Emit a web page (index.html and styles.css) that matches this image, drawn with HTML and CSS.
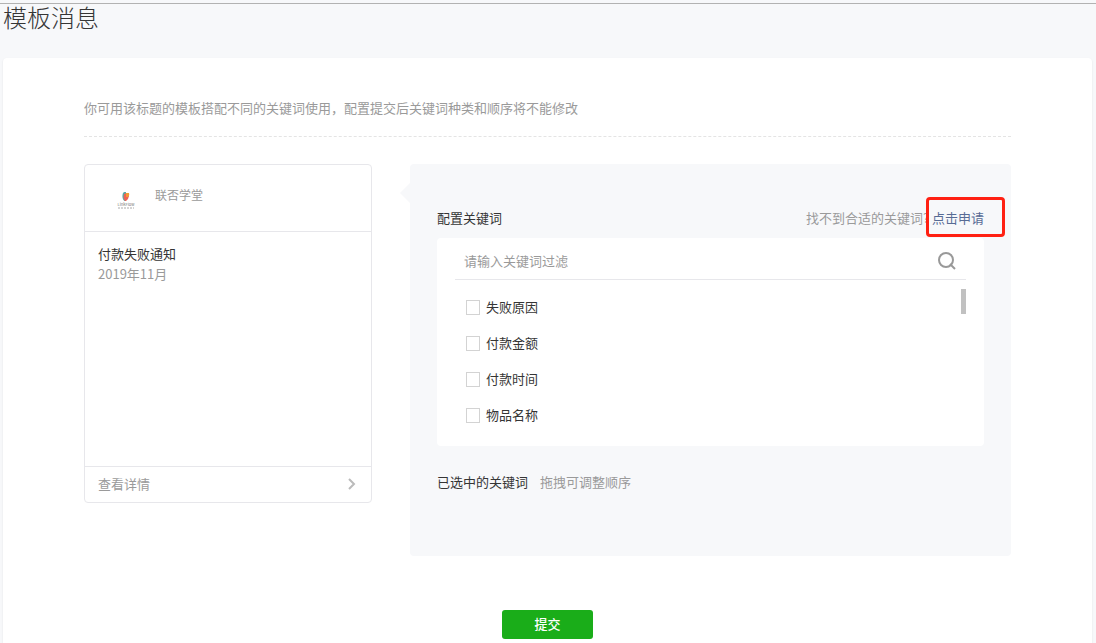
FILE: index.html
```
<!DOCTYPE html>
<html lang="zh-CN">
  <head>
    <meta charset="UTF-8" />
    <meta name="viewport" content="width=device-width, initial-scale=1.0" />
    <title>模板消息</title>
    <link rel="stylesheet" href="styles.css">
  </head>
  <body>
    <header class="page-header">
      <h1>模板消息</h1>
    </header>
    <main class="panel">
      <p class="intro">你可用该标题的模板搭配不同的关键词使用，配置提交后关键词种类和顺序将不能修改</p>
      <form class="config">
        <div class="columns">
          <section class="preview">
            <div class="preview-head">
              <svg class="logo" viewBox="0 0 18 18" aria-hidden="true">
                <path d="M7 1h2v9H7.500Q5 8 5.500 4Q5.500 2 7 1z" fill="#57a9a5" />
                <path d="M7 3l3-1 2 3-1 3-2 2H8L6.500 7z" fill="#ed6257" />
                <path d="M9 2h3q1 2-1 4H9z" fill="#f39a32" />
                <text x="9" y="15" font-size="4" text-anchor="middle" fill="#777">LinkFlow</text>
                <path d="M1 17h16" stroke="#aaa" stroke-width="1" stroke-dasharray="2 1" />
              </svg>
              <span class="account">联否学堂</span>
            </div>
            <div class="preview-body">
              <h2>付款失败通知</h2>
              <p>2019年11月</p>
            </div>
            <a class="preview-foot" href="#">
              查看详情
              <svg class="arrow" viewBox="0 0 10 12" aria-hidden="true">
                <path d="M2 1l5 5-5 5" fill="none" stroke="#bbb" stroke-width="2" />
              </svg>
            </a>
          </section>
          <section class="keywords">
            <div class="keywords-head">
              <h2>配置关键词</h2>
              <p>找不到合适的关键词? <a class="apply" href="#">点击申请</a></p>
            </div>
            <div class="picker">
              <div class="search">
                <input type="text" placeholder="请输入关键词过滤" aria-label="请输入关键词过滤" />
                <button class="search-btn" type="button" aria-label="搜索">
                  <svg viewBox="0 0 18 18" aria-hidden="true">
                    <circle cx="8" cy="8" r="7" fill="none" stroke="#999" stroke-width="2" />
                    <path d="M12 12l5 5" stroke="#999" stroke-width="2" />
                  </svg>
                </button>
              </div>
              <div class="options">
                <ul>
                  <li><label><input type="checkbox" /> 失败原因</label></li>
                  <li><label><input type="checkbox" /> 付款金额</label></li>
                  <li><label><input type="checkbox" /> 付款时间</label></li>
                  <li><label><input type="checkbox" /> 物品名称</label></li>
                </ul>
                <span class="thumb"></span>
              </div>
            </div>
            <div class="selected">
              <h2>已选中的关键词</h2>
              <p>拖拽可调整顺序</p>
            </div>
          </section>
        </div>
        <button class="submit" type="button">提交</button>
      </form>
    </main>
  </body>
</html>
```

FILE: styles.css
```
*,
*::before,
*::after {
  box-sizing: border-box;
}
html {
  height: 100%;
}
body {
  margin: 0;
  min-height: 100%;
  padding-top: 3px;
  display: flex;
  flex-direction: column;
  background-color: #f7f8fa;
  color: #353535;
  font-family: "Noto Sans CJK SC", sans-serif;
  font-size: 13px;
  line-height: 20px;
}
h1,
h2,
p,
ul {
  margin: 0;
  padding: 0;
}
h2 {
  font-size: 13px;
  font-weight: 400;
}
a {
  text-decoration: none;
}
input,
button {
  font: inherit;
}
.page-header {
  height: 55px;
  padding: 0 3px;
  border-top: 1px solid #b2b2b2;
}
h1 {
  font-size: 24px;
  line-height: 26px;
  font-weight: 300;
}
.panel {
  flex: 1;
  margin: 0 4px 0 3px;
  padding: 40px 81px 4px;
  background-color: #fff;
  border-radius: 4px 4px 0 0;
  box-shadow: 0 1px 2px rgba(0, 0, 0, 0.1);
}
.intro {
  padding-bottom: 18px;
  border-bottom: 1px dashed #e4e4e4;
  color: #9a9a9a;
}
.columns {
  display: flex;
  align-items: flex-start;
  gap: 38px;
  padding-top: 27px;
}
.preview {
  flex: none;
  width: 288px;
  min-height: 339px;
  display: flex;
  flex-direction: column;
  border: 1px solid #e7e7eb;
  border-radius: 4px;
}
.preview-head {
  display: flex;
  gap: 20px;
  height: 67px;
  padding: 20px 32px;
  border-bottom: 1px solid #e7e7eb;
}
.logo {
  width: 18px;
  height: 18px;
  margin-top: 6px;
}
.account {
  color: #9a9a9a;
  font-size: 12px;
}
.preview-body {
  flex: 1;
  padding: 12px 13px;
}
.preview-body p {
  color: #9a9a9a;
}
.preview-foot {
  display: flex;
  justify-content: space-between;
  align-items: center;
  height: 36px;
  padding: 0 14px 1px 13px;
  border-top: 1px solid #e7e7eb;
  color: #9a9a9a;
}
.arrow {
  width: 10px;
  height: 12px;
}
.keywords {
  position: relative;
  flex: 1;
  min-height: 392px;
  padding: 44px 27px;
  background-color: #f7f8fa;
  border-radius: 4px;
}
/* arrow pointing at the preview card */
.keywords::before {
  content: "";
  position: absolute;
  top: 19px;
  left: -10px;
  border: 10px solid transparent;
  border-left: 0;
  border-right-color: #f7f8fa;
}
.keywords-head {
  display: flex;
  justify-content: space-between;
  padding-bottom: 10px;
}
.keywords-head p,
.selected p {
  color: #9a9a9a;
}
.apply {
  position: relative;
  color: #576b95;
}
/* red frame over the link */
.apply::after {
  content: "";
  position: absolute;
  top: -11px;
  right: -21px;
  width: 79px;
  height: 40px;
  border: 3px solid #ff2012;
  border-radius: 4px;
}
.picker {
  padding: 0 18px;
  min-height: 208px;
  background-color: #fff;
  border-radius: 4px;
}
.search {
  display: flex;
  align-items: center;
  height: 42px;
  padding: 4px 10px 0 9px;
  border-bottom: 1px solid #e7e7eb;
}
.search input {
  flex: 1;
  min-width: 0;
  padding: 0;
  border: 0;
  outline: 0;
  background: none;
}
.search input::placeholder {
  color: #9a9a9a;
}
.search-btn {
  display: flex;
  padding: 0;
  border: 0;
  background: none;
  cursor: pointer;
}
.search-btn svg {
  width: 18px;
  height: 18px;
}
.options {
  display: flex;
  justify-content: space-between;
  padding: 9px 0 0 11px;
}
.options li {
  height: 36px;
  list-style: none;
}
.options label {
  display: flex;
  align-items: center;
  gap: 6px;
  height: 36px;
}
.options input {
  appearance: none;
  width: 14px;
  height: 15px;
  margin: 0;
  border: 1px solid #d3d3d3;
  background-color: #fff;
}
.options input:checked {
  background-color: #1aad19;
}
.thumb {
  width: 5px;
  height: 25px;
  background-color: #c1c1c1;
}
.selected {
  display: flex;
  gap: 12px;
  padding-top: 26px;
}
.submit {
  display: block;
  width: 91px;
  height: 29px;
  margin: 54px auto 0;
  padding: 0 0 2px;
  border: 0;
  border-radius: 3px;
  background-color: #1aad19;
  color: #fff;
  font-weight: 500;
  cursor: pointer;
}
```
